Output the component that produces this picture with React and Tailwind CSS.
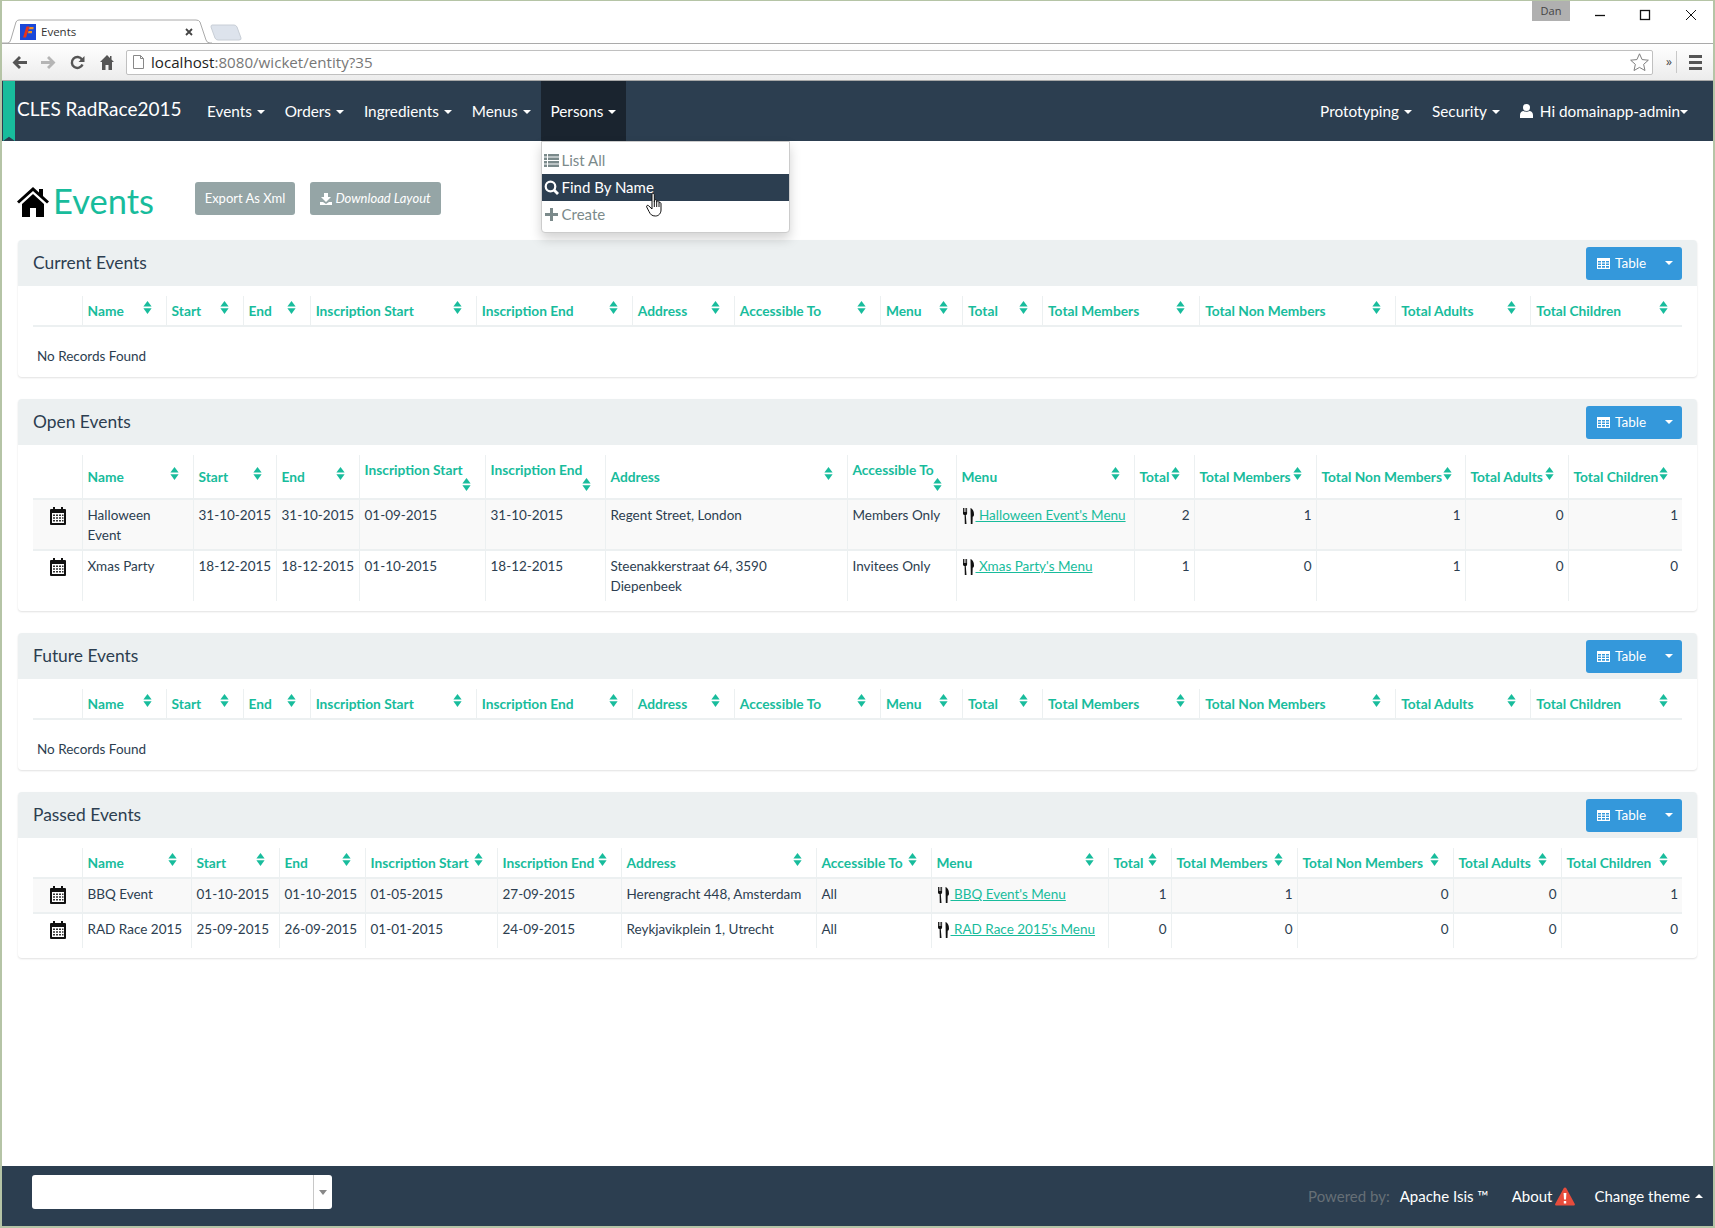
import React from 'react';

const Sort = () => (
  <svg width="9" height="13" viewBox="0 0 9 13" className="shrink-0 -translate-y-[3px]" fill="#18bc9c">
    <path d="M4.5 0 L8.6 5.6 H0.4 Z" />
    <path d="M0.4 7.2 H8.6 L4.5 13 Z" />
  </svg>
);

const Calendar = () => (
  <svg width="16" height="18" viewBox="0 0 16 18" className="block mx-auto">
    <rect x="0" y="2" width="16" height="16" rx="1" fill="#111" />
    <rect x="3" y="0" width="2" height="4" fill="#111" />
    <rect x="11" y="0" width="2" height="4" fill="#111" />
    <rect x="2" y="6" width="12" height="10" fill="#fff" />
    <path d="M3 7.5h2v1.5H3zM6 7.5h2v1.5H6zM9 7.5h2v1.5H9zM12 7.5h1.5v1.5H12zM3 10.2h2v1.5H3zM6 10.2h2v1.5H6zM9 10.2h2v1.5H9zM12 10.2h1.5v1.5H12zM3 13h2v1.5H3zM6 13h2v1.5H6zM9 13h2v1.5H9zM12 13h1.5v1.5H12z" fill="#333" />
  </svg>
);

const Cutlery = () => (
  <svg width="11" height="16" viewBox="0 0 11 16" className="inline-block align-[-4px] ml-[1px] mr-[2px]" fill="#111">
    <path d="M0 0h.9v4h.7V0h.9v4h.7V0h.9v5.4c0 .9-.6 1.5-1.3 1.7L3.5 16H1.8l-.2-8.9C.6 6.9 0 6.300 0 5.400z" />
    <path d="M7.500 0C9.500 0.500 11 3 11 6.500c0 1.200-.4 2-1.300 2.300L9.500 16H7.800z" />
  </svg>
);

const TableIcon = () => (
  <svg width="13" height="11" viewBox="0 0 13 11" fill="#fff">
    <path fillRule="evenodd" d="M0 0h13v11H0zM1 3v1.600h3V3zM5 3v1.600h3V3zM9 3v1.600h3V3zM1 5.500v1.600h3V5.500zM5 5.500v1.600h3V5.500zM9 5.500v1.600h3V5.500zM1 8v1.800h3V8zM5 8v1.800h3V8zM9 8v1.800h3V8z" />
  </svg>
);

const Caret = ({ className }) => (
  <span className={`inline-block w-0 h-0 border-x-[4px] border-x-transparent border-t-[4px] border-t-white ${className || ''}`} />
);

const HEADS = ['Name', 'Start', 'End', 'Inscription Start', 'Inscription End', 'Address', 'Accessible To', 'Menu', 'Total', 'Total Members', 'Total Non Members', 'Total Adults', 'Total Children'];

const COLS_EMPTY = ['w-[49px]', 'w-[84px]', 'w-[77px]', 'w-[67px]', 'w-[166px]', 'w-[156px]', 'w-[102px]', 'w-[146px]', 'w-[82px]', 'w-[80px]', 'w-[157px]', 'w-[196px]', 'w-[135px]', 'w-[151px]'];
const COLS_OPEN = ['w-[49px]', 'w-[111px]', 'w-[83px]', 'w-[83px]', 'w-[126px]', 'w-[120px]', 'w-[242px]', 'w-[109px]', 'w-[178px]', 'w-[60px]', 'w-[122px]', 'w-[149px]', 'w-[103px]', 'w-[114px]'];
const COLS_PASSED = ['w-[49px]', 'w-[109px]', 'w-[88px]', 'w-[86px]', 'w-[132px]', 'w-[124px]', 'w-[195px]', 'w-[115px]', 'w-[177px]', 'w-[63px]', 'w-[126px]', 'w-[156px]', 'w-[108px]', 'w-[121px]'];

const OPEN = [
  ['Halloween\nEvent', '31-10-2015', '31-10-2015', '01-09-2015', '31-10-2015', 'Regent Street, London', 'Members Only', "Halloween Event's Menu", 2, 1, 1, 0, 1],
  ['Xmas Party', '18-12-2015', '18-12-2015', '01-10-2015', '18-12-2015', 'Steenakkerstraat 64, 3590\nDiepenbeek', 'Invitees Only', "Xmas Party's Menu", 1, 0, 1, 0, 0],
];
const PASSED = [
  ['BBQ Event', '01-10-2015', '01-10-2015', '01-05-2015', '27-09-2015', 'Herengracht 448, Amsterdam', 'All', "BBQ Event's Menu", 1, 1, 0, 0, 1],
  ['RAD Race 2015', '25-09-2015', '26-09-2015', '01-01-2015', '24-09-2015', 'Reykjavikplein 1, Utrecht', 'All', "RAD Race 2015's Menu", 0, 0, 0, 0, 0],
];

function DataTable({ cols, rows, wrap = [], thClass, rowClass }) {
  return (
    <table className="table-fixed w-[1649px] text-[13.500px] text-[#2c3e50]">
      <colgroup>
        {cols.map((c, i) => <col key={i} className={c} />)}
      </colgroup>
      <thead>
        <tr className={`border-b-2 border-[#ecf0f1] ${thClass}`}>
          <th />
          {HEADS.map((h, i) => (
            <th key={h} className="border-l border-[#ecf0f1] pl-[5px] pr-[14px] align-middle text-left font-bold text-[#18bc9c] text-[13.750px] leading-[17px]">
              {wrap.includes(i) ? (
                <div>
                  <div className="whitespace-nowrap">{h}</div>
                  <div className="flex justify-end h-[15px] pt-[3px]"><Sort /></div>
                </div>
              ) : (
                <div className="flex justify-between items-center gap-[1px]">
                  <span className="whitespace-nowrap">{h}</span>
                  <Sort />
                </div>
              )}
            </th>
          ))}
        </tr>
      </thead>
      <tbody>
        {rows.map((r, ri) => (
          <tr key={ri} className={`${rowClass} ${ri === 0 ? 'bg-[#f9f9f9] border-b-2 border-[#ecf0f1]' : ''}`}>
            <td className="align-top pt-[7px] pl-[2px]"><Calendar /></td>
            {r.map((v, i) => (
              <td key={i} className={`border-l border-[#ecf0f1] align-top pl-[5px] pt-[5px] leading-[20px] whitespace-pre-line ${i >= 8 ? 'text-right pr-[4px]' : 'pr-[4px]'}`}>
                {i === 7 ? (
                  <span><Cutlery /><a className="text-[#18bc9c] underline whitespace-pre"> {v}</a></span>
                ) : v}
              </td>
            ))}
          </tr>
        ))}
      </tbody>
    </table>
  );
}

function Panel({ title, children, mb = 'mb-[22px]' }) {
  return (
    <section className={`rounded-[4px] bg-white shadow-[0_1px_2px_rgba(0,0,0,0.12)] ${mb}`}>
      <header className="h-[46px] bg-[#ecf0f1] rounded-t-[4px] flex items-center justify-between pl-[15px] pr-[15px]">
        <h3 className="text-[17.400px] text-[#2c3e50]">{title}</h3>
        <div className="w-[96px] h-[33px] rounded-[3px] bg-[#3498db] flex items-center text-white text-[13.500px] pl-[11px]">
          <TableIcon />
          <span className="ml-[5px]">Table</span>
          <Caret className="ml-[19px]" />
        </div>
      </header>
      <div className="px-[15px] pt-[10px]">{children}</div>
    </section>
  );
}

function NavItem({ label, active, children }) {
  return (
    <div className={`relative h-full flex items-center px-[10px] ${active ? 'bg-[#1a242f]' : ''}`}>
      <span className="text-white text-[15.300px]">{label}</span>
      <Caret className="ml-[5px] mt-[2px]" />
      {children}
    </div>
  );
}

const MenuIconList = () => (
  <svg width="15" height="13" viewBox="0 0 15 13" fill="#7b8a8b">
    <path d="M0 0h3v2.500H0zM4 0h11v2.500H4zM0 3.500h3v2.500H0zM4 3.500h11v2.500H4zM0 7h3v2.500H0zM4 7h11v2.500H4zM0 10.500h3V13H0zM4 10.500h11V13H4z" />
  </svg>
);

export default function App() {
  return (
    <div className="[font-family:Lato,sans-serif] w-[1715px] h-[1228px] overflow-hidden flex flex-col bg-white border-x-2 border-t border-b-2 border-[#b5c4a6]">
      {/* browser tab strip */}
      <div className="h-[43px] shrink-0 flex items-end border-b border-[#aaaaaa] bg-white [font-family:'Open_Sans',sans-serif]">
        <div className="relative w-[210px] h-[25px] -mb-[1px] flex items-center shrink-0">
          <svg width="210" height="25" viewBox="0 0 210 25" className="absolute inset-0">
            <path d="M0 24 H6 Q8 24 9 20 L14 3 Q15 1 17 1 H194 Q197 1 198 3 L204 21 Q205 24 208 24 H210" fill="#fff" stroke="#aaaaaa" />
          </svg>
          <svg width="16" height="16" viewBox="0 0 16 16" className="relative ml-[18px]">
            <rect width="16" height="16" fill="#1a47d8" />
            <path d="M3 13.500 L6.500 2.500 H9.500 L6 13.500 Z" fill="#e8321a" />
            <path d="M9.500 3 H13.500 V5.200 H9 Z M8.500 7 H12 V9.200 H8 Z" fill="#f09020" />
          </svg>
          <span className="relative ml-[5px] text-[11.500px] text-[#333333]">Events</span>
          <svg width="8" height="8" viewBox="0 0 8 8" className="relative ml-[109px]" stroke="#444" strokeWidth="1.800"><path d="M1 1l6 6M7 1l-6 6" /></svg>
        </div>
        <svg width="34" height="17" viewBox="0 0 34 17" className="-ml-[2px] mb-[2px] shrink-0">
          <path d="M2 1 H24 Q26 1 27 3 L31 14 Q31.500 16 29 16 H8 Q6 16 5 14 L1 3 Q1 1 2 1Z" fill="#dde3ec" stroke="#c8ced6" />
        </svg>
        <div className="self-start ml-auto flex items-start shrink-0 pr-[16px]">
          <div className="w-[38px] h-[20px] bg-[#b0b0b0] text-[11px] text-[#444] text-center leading-[20px]">Dan</div>
          <svg width="103" height="20" viewBox="0 0 103 20" className="ml-[24px]" fill="none" stroke="#111" strokeWidth="1">
            <path d="M1 14.500 H11" strokeWidth="1.300" />
            <rect x="46.500" y="9.500" width="9" height="9" strokeWidth="1.300" />
            <path d="M92 9l10 10M102 9L92 19" />
          </svg>
        </div>
      </div>

      {/* browser toolbar */}
      <div className="h-[37px] shrink-0 flex items-center bg-gradient-to-b from-white to-[#ececec] border-b border-[#a8a8a8] [font-family:'Open_Sans',sans-serif]">
        <svg width="15" height="13" viewBox="0 0 15 13" className="ml-[10px]" fill="#555"><path d="M7 0l2 2-3 3h9v3H6l3 3-2 2-6.500-6.500z" /></svg>
        <svg width="15" height="13" viewBox="0 0 15 13" className="ml-[14px]" fill="#b5b5b5"><path d="M8 0l-2 2 3 3H0v3h9l-3 3 2 2 6.500-6.500z" /></svg>
        <svg width="15" height="15" viewBox="0 0 15 15" className="ml-[14px]" fill="none"><path d="M12.500 9.500A5.500 5.500 0 1 1 12 4.500" stroke="#555" strokeWidth="2.400" /><path d="M14.500 1v6h-6z" fill="#555" /></svg>
        <svg width="14" height="15" viewBox="0 0 14 15" className="ml-[15px]" fill="#555"><path d="M7 0L0 7h2v8h3.500v-5h3v5H12V7h2l-2.500-2.500V1H10v2z" /></svg>
        <div className="ml-[12px] w-[1527px] h-[25px] bg-white border border-[#c0c0c0] rounded-[2px] flex items-center shrink-0 pl-[6px] pr-[3px]">
          <svg width="11" height="14" viewBox="0 0 11 14" fill="#fff" stroke="#888"><path d="M.5.500h7l3 3v10H.5z" /><path d="M7.500.500v3h3" fill="none" /></svg>
          <span className="ml-[7px] text-[15.150px] text-[#222222]">localhost<span className="text-[#777777]">:8080/wicket/entity?35</span></span>
          <svg width="19" height="18" viewBox="0 0 24 23" className="ml-auto" fill="#fff" stroke="#777" strokeWidth="1.200"><path d="M12 1l3.300 7.400 8 .8-6 5.300 1.700 7.900L12 18.400 5 22.400l1.700-7.900-6-5.300 8-.8z" /></svg>
        </div>
        <span className="ml-[13px] text-[12px] text-[#444]">»</span>
        <span className="ml-[4px] w-px h-[22px] bg-[#c8c8c8]" />
        <div className="ml-[12px] w-[13px] flex flex-col gap-[3px]">
          <span className="h-[3px] bg-[#555]" /><span className="h-[3px] bg-[#555]" /><span className="h-[3px] bg-[#555]" />
        </div>
      </div>

      {/* app navbar */}
      <nav className="relative h-[60px] shrink-0 bg-[#2c3e50] flex items-center">
        <div className="absolute left-[1px] top-0 w-[12px] h-[60px] bg-[#18bc9c] [clip-path:polygon(0_0,100%_0,100%_100%,50%_93%,0_100%)]" />
        <span className="ml-[15px] w-[180px] text-white text-[19px] -translate-y-[2px] whitespace-nowrap">CLES RadRace2015</span>
        <NavItem label="Events" />
        <NavItem label="Orders" />
        <NavItem label="Ingredients" />
        <NavItem label="Menus" />
        <NavItem label="Persons" active>
          <div className="absolute left-0 top-full w-[249px] h-[92px] z-10 bg-white rounded-b-[4px] border border-[#cccccc] shadow-[0_6px_12px_rgba(0,0,0,0.175)] pt-[5px] text-[15px] text-[#7b8a8b]">
            <div className="h-[27px] flex items-center pl-[2px]"><MenuIconList /><span className="ml-[3px]">List All</span></div>
            <div className="h-[27px] flex items-center pl-[2px] bg-[#2c3e50] text-white">
              <svg width="15" height="15" viewBox="0 0 15 15" fill="none" stroke="#fff" strokeWidth="2.200"><circle cx="6.500" cy="6.500" r="4.800" /><path d="M10 10l4 4" strokeWidth="2.800" /></svg>
              <span className="ml-[3px]">Find By Name</span>
            </div>
            <div className="h-[27px] flex items-center pl-[3px]">
              <svg width="13" height="13" viewBox="0 0 13 13" fill="#7b8a8b"><path d="M5 0h3v5h5v3H8v5H5V8H0V5h5z" /></svg>
              <span className="ml-[4px]">Create</span>
            </div>
            <svg width="18" height="24" viewBox="0 0 18 24" className="absolute left-[104px] top-[51px]" fill="#fff" stroke="#111" strokeWidth="1" strokeLinejoin="round">
              <path d="M6 1.500c0-1.300 2.300-1.300 2.300 0V9l.2-1.500c.2-1 2-1 2.200 0V9.500l.2-1c.2-1 2-.8 2.100.2v1.300c.3-.7 2-.6 2 .5V17c0 3-2 6-5.500 6-3.700 0-5-1.500-6.500-4.500L.7 14c-.7-1.300 1-2.300 2-1.200L6 16z" />
              <path d="M8.300 9v5M10.700 9.500V14M13 10v4" fill="none" />
            </svg>
          </div>
        </NavItem>
        <div className="ml-auto flex items-center h-full pr-[15px]">
          <NavItem label="Prototyping" />
          <NavItem label="Security" />
          <div className="flex items-center px-[10px] text-white text-[15.300px]">
            <svg width="13" height="14" viewBox="0 0 13 14" fill="#fff" className="mr-[7px]"><circle cx="6.500" cy="3.500" r="3.500" /><path d="M0 14v-3c0-2.500 2-4 3.500-4 1 1 4.500 1 6 0C11 7 13 8.500 13 11v3z" /></svg>
            <span>Hi domainapp-admin</span>
            <Caret className="mt-[2px]" />
          </div>
        </div>
      </nav>

      {/* page */}
      <main className="flex-1 min-h-0 pl-[16px] pr-[16px] pt-[41px]">
        <div className="-ml-[1px] flex items-start h-[40px] mb-[18px]">
          <div className="w-[178px] h-[40px] flex items-center">
            <svg width="32" height="30" viewBox="0 0 32 30" fill="#000">
              <path d="M16 0L0 14.500 2 16.500 16 4l14 12.500 2-2L26 9V2h-4v3.500z" />
              <path fillRule="evenodd" d="M5 17L16 7l11 10v13H5zM13 21v9h6v-9z" />
            </svg>
            <h1 className="ml-[4px] text-[34.500px] leading-none text-[#18bc9c] -translate-y-[1px]">Events</h1>
          </div>
          <div className="flex gap-[15px]">
            <div className="w-[100px] h-[33px] rounded-[3px] bg-[#95a5a6] text-white text-[13px] flex items-center justify-center">Export As Xml</div>
            <div className="w-[131px] h-[33px] rounded-[3px] bg-[#95a5a6] text-white text-[13px] italic flex items-center justify-center">
              <svg width="12" height="12" viewBox="0 0 12 12" fill="#fff" className="mr-[3px]"><path d="M4 0h4v4h3L6 9 1 4h3zM0 9h3l3 2 3-2h3v3H0z" /></svg>
              Download Layout
            </div>
          </div>
        </div>

        <Panel title="Current Events">
          <DataTable cols={COLS_EMPTY} rows={[]} thClass="h-[30px]" />
          <div className="h-[50px] flex items-center pl-[4px] pt-[9px] text-[13.500px] text-[#2c3e50]">No Records Found</div>
        </Panel>

        <Panel title="Open Events">
          <DataTable cols={COLS_OPEN} rows={OPEN} wrap={[3, 4, 6]} thClass="h-[44px]" rowClass="h-[51px]" />
          <div className="h-[10px]" />
        </Panel>

        <Panel title="Future Events">
          <DataTable cols={COLS_EMPTY} rows={[]} thClass="h-[30px]" />
          <div className="h-[50px] flex items-center pl-[4px] pt-[9px] text-[13.500px] text-[#2c3e50]">No Records Found</div>
        </Panel>

        <Panel title="Passed Events">
          <DataTable cols={COLS_PASSED} rows={PASSED} thClass="h-[30px]" rowClass="h-[35px]" />
          <div className="h-[10px]" />
        </Panel>
      </main>

      {/* footer */}
      <footer className="h-[60px] shrink-0 bg-[#2c3e50] flex items-center text-[15px] text-white">
        <div className="self-start mt-[9px] ml-[30px] w-[300px] h-[34px] bg-white rounded-[3px] flex justify-end">
          <div className="w-[19px] h-full border-l border-[#c8c8c8] flex items-center justify-center">
            <span className="w-0 h-0 border-x-[4px] border-x-transparent border-t-[5px] border-t-[#888888]" />
          </div>
        </div>
        <div className="ml-auto flex items-center pr-[10px]">
          <span className="text-[#666f76]">Powered by:</span>
          <span className="ml-[10px]">Apache Isis ™</span>
          <span className="ml-[23px]">About</span>
          <svg width="20" height="19" viewBox="0 0 20 19" className="ml-[3px]"><path d="M10 .500c.6 0 1 .3 1.300.8l8.400 15.400c.5 1-.1 1.800-1.100 1.800H1.400C.4 18.500-.2 17.700.300 16.700L8.700 1.300C9 .800 9.400.500 10 .500z" fill="#e74c3c" /><path d="M8.600 6h2.800l-.4 6.500H9zM8.800 14h2.400v2.400H8.800z" fill="#fff" /></svg>
          <span className="ml-[19px]">Change theme</span>
          <span className="ml-[5px] w-0 h-0 border-x-[4px] border-x-transparent border-b-[4px] border-b-white" />
        </div>
      </footer>
    </div>
  );
}
